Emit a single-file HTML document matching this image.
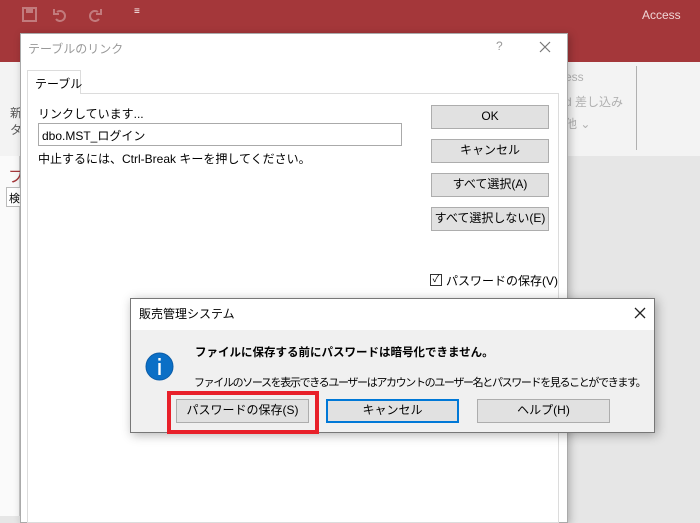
<!DOCTYPE html>
<html><head><meta charset="utf-8"><style>
*{margin:0;padding:0;box-sizing:border-box}
body{width:700px;height:516px;overflow:hidden;position:relative;background:#e6e6e6;font-family:"Liberation Sans","Noto Sans CJK JP",sans-serif;font-size:12px;color:#000}
.a{position:absolute;white-space:nowrap}
.btn{position:absolute;background:#e1e1e1;border:1px solid #adadad;text-align:center;line-height:21px;font-size:12px;white-space:nowrap}
</style></head><body>
<div class="a" style="left:0;top:0;width:700px;height:62px;background:#a4373a"></div>
<div class="a" style="left:642px;top:8px;color:#f0d6d6;font-size:12px">Access</div>
<svg class="a" style="left:22px;top:6px" width="120" height="18"><rect x="1" y="2" width="13" height="13" fill="none" stroke="#c27b7d" stroke-width="2"/><rect x="4" y="3" width="7" height="4" fill="#c27b7d"/><path d="M35 6 a5 5 0 1 1 -1 7 M32 3 v5 h5" fill="none" stroke="#c27b7d" stroke-width="2"/><path d="M76 6 a5 5 0 1 0 1 7 M79 3 v5 h-5" fill="none" stroke="#c27b7d" stroke-width="2"/></svg>
<div class="a" style="left:134px;top:6px;color:#fff;font-size:10px">&#8801;</div>
<div class="a" style="left:0;top:62px;width:700px;height:94px;background:#f3f3f3"></div>
<div class="a" style="left:636px;top:66px;width:1px;height:84px;background:#b0b0b0"></div>
<div class="a" style="left:565px;top:70px;color:#b0b0b0">ess</div>
<div class="a" style="left:565px;top:93px;color:#b0b0b0">d 差し込み</div>
<div class="a" style="left:565px;top:115px;color:#b0b0b0">他 ⌄</div>
<div class="a" style="left:10px;top:104px;color:#555;white-space:normal;width:10px">新<br>タ</div>
<div class="a" style="left:0;top:156px;width:20px;height:360px;background:#fafafa;border-right:1px solid #ccc"></div>
<div class="a" style="left:8px;top:163px;color:#a4373a;font-size:16px">フ</div>
<div class="a" style="left:6px;top:187px;width:16px;height:20px;border:1px solid #bbb;background:#fff;font-size:11px;padding:2px">検</div>
<!-- main dialog -->
<div class="a" style="left:20px;top:33px;width:548px;height:490px;background:#fff;border:1px solid #aaa;box-shadow:2px 2px 8px rgba(0,0,0,.25)"></div>
<div class="a" style="left:28px;top:40px;color:#999">テーブルのリンク</div>
<div class="a" style="left:496px;top:39px;color:#999">?</div>
<svg class="a" style="left:539px;top:41px" width="12" height="12"><path d="M1 1L11 11M11 1L1 11" stroke="#777" stroke-width="1.2"/></svg>
<div class="a" style="left:27px;top:93px;width:532px;height:430px;border:1px solid #dcdcdc"></div>
<div class="a" style="left:27px;top:70px;width:54px;height:24px;border:1px solid #dcdcdc;border-bottom:none;background:#fff;padding:4px 0 0 7px">テーブル</div>
<div class="a" style="left:38px;top:105px">リンクしています...</div>
<div class="a" style="left:38px;top:123px;width:364px;height:23px;border:1px solid #aaa;padding:3px 0 0 3px">dbo.MST_ログイン</div>
<div class="a" style="left:38px;top:150px">中止するには、Ctrl-Break キーを押してください。</div>
<div class="btn" style="left:431px;top:105px;width:118px;height:24px">OK</div>
<div class="btn" style="left:431px;top:139px;width:118px;height:24px">キャンセル</div>
<div class="btn" style="left:431px;top:173px;width:118px;height:24px">すべて選択(A)</div>
<div class="btn" style="left:431px;top:207px;width:118px;height:24px">すべて選択しない(E)</div>
<div class="a" style="left:430px;top:274px;width:12px;height:12px;border:1px solid #333;font-size:10px;line-height:10px;text-align:center">✓</div>
<div class="a" style="left:446px;top:272px">パスワードの保存(V)</div>
<!-- message box -->
<div class="a" style="left:130px;top:298px;width:525px;height:135px;background:#f0f0f0;border:1px solid #777;box-shadow:2px 2px 10px rgba(0,0,0,.3)"></div>
<div class="a" style="left:131px;top:299px;width:523px;height:31px;background:#fff"></div>
<div class="a" style="left:139px;top:305px">販売管理システム</div>
<svg class="a" style="left:634px;top:307px" width="12" height="12"><path d="M1 1L11 11M11 1L1 11" stroke="#222" stroke-width="1.3"/></svg>
<svg class="a" style="left:145px;top:352px" width="30" height="30"><circle cx="14.5" cy="14.5" r="13.5" fill="#0b6fc6" stroke="#0a5ca8"/><rect x="13.3" y="6" width="2.4" height="2.6" fill="#fff"/><rect x="13.3" y="11" width="2.4" height="12" fill="#fff"/></svg>
<div class="a" style="left:195px;top:344px;font-weight:bold;font-size:11.5px">ファイルに保存する前にパスワードは暗号化できません。</div>
<div class="a" style="left:194px;top:374px;font-size:11px;letter-spacing:-1.35px">ファイルのソースを表示できるユーザーはアカウントのユーザー名とパスワードを見ることができます。</div>
<div class="a" style="left:167px;top:391px;width:152px;height:43px;border:4px solid #e8202a"></div>
<div class="btn" style="left:176px;top:399px;width:133px;height:24px">パスワードの保存(S)</div>
<div class="btn" style="left:326px;top:399px;width:133px;height:24px;border:2px solid #0078d7;line-height:19px">キャンセル</div>
<div class="btn" style="left:477px;top:399px;width:133px;height:24px">ヘルプ(H)</div>
</body></html>
